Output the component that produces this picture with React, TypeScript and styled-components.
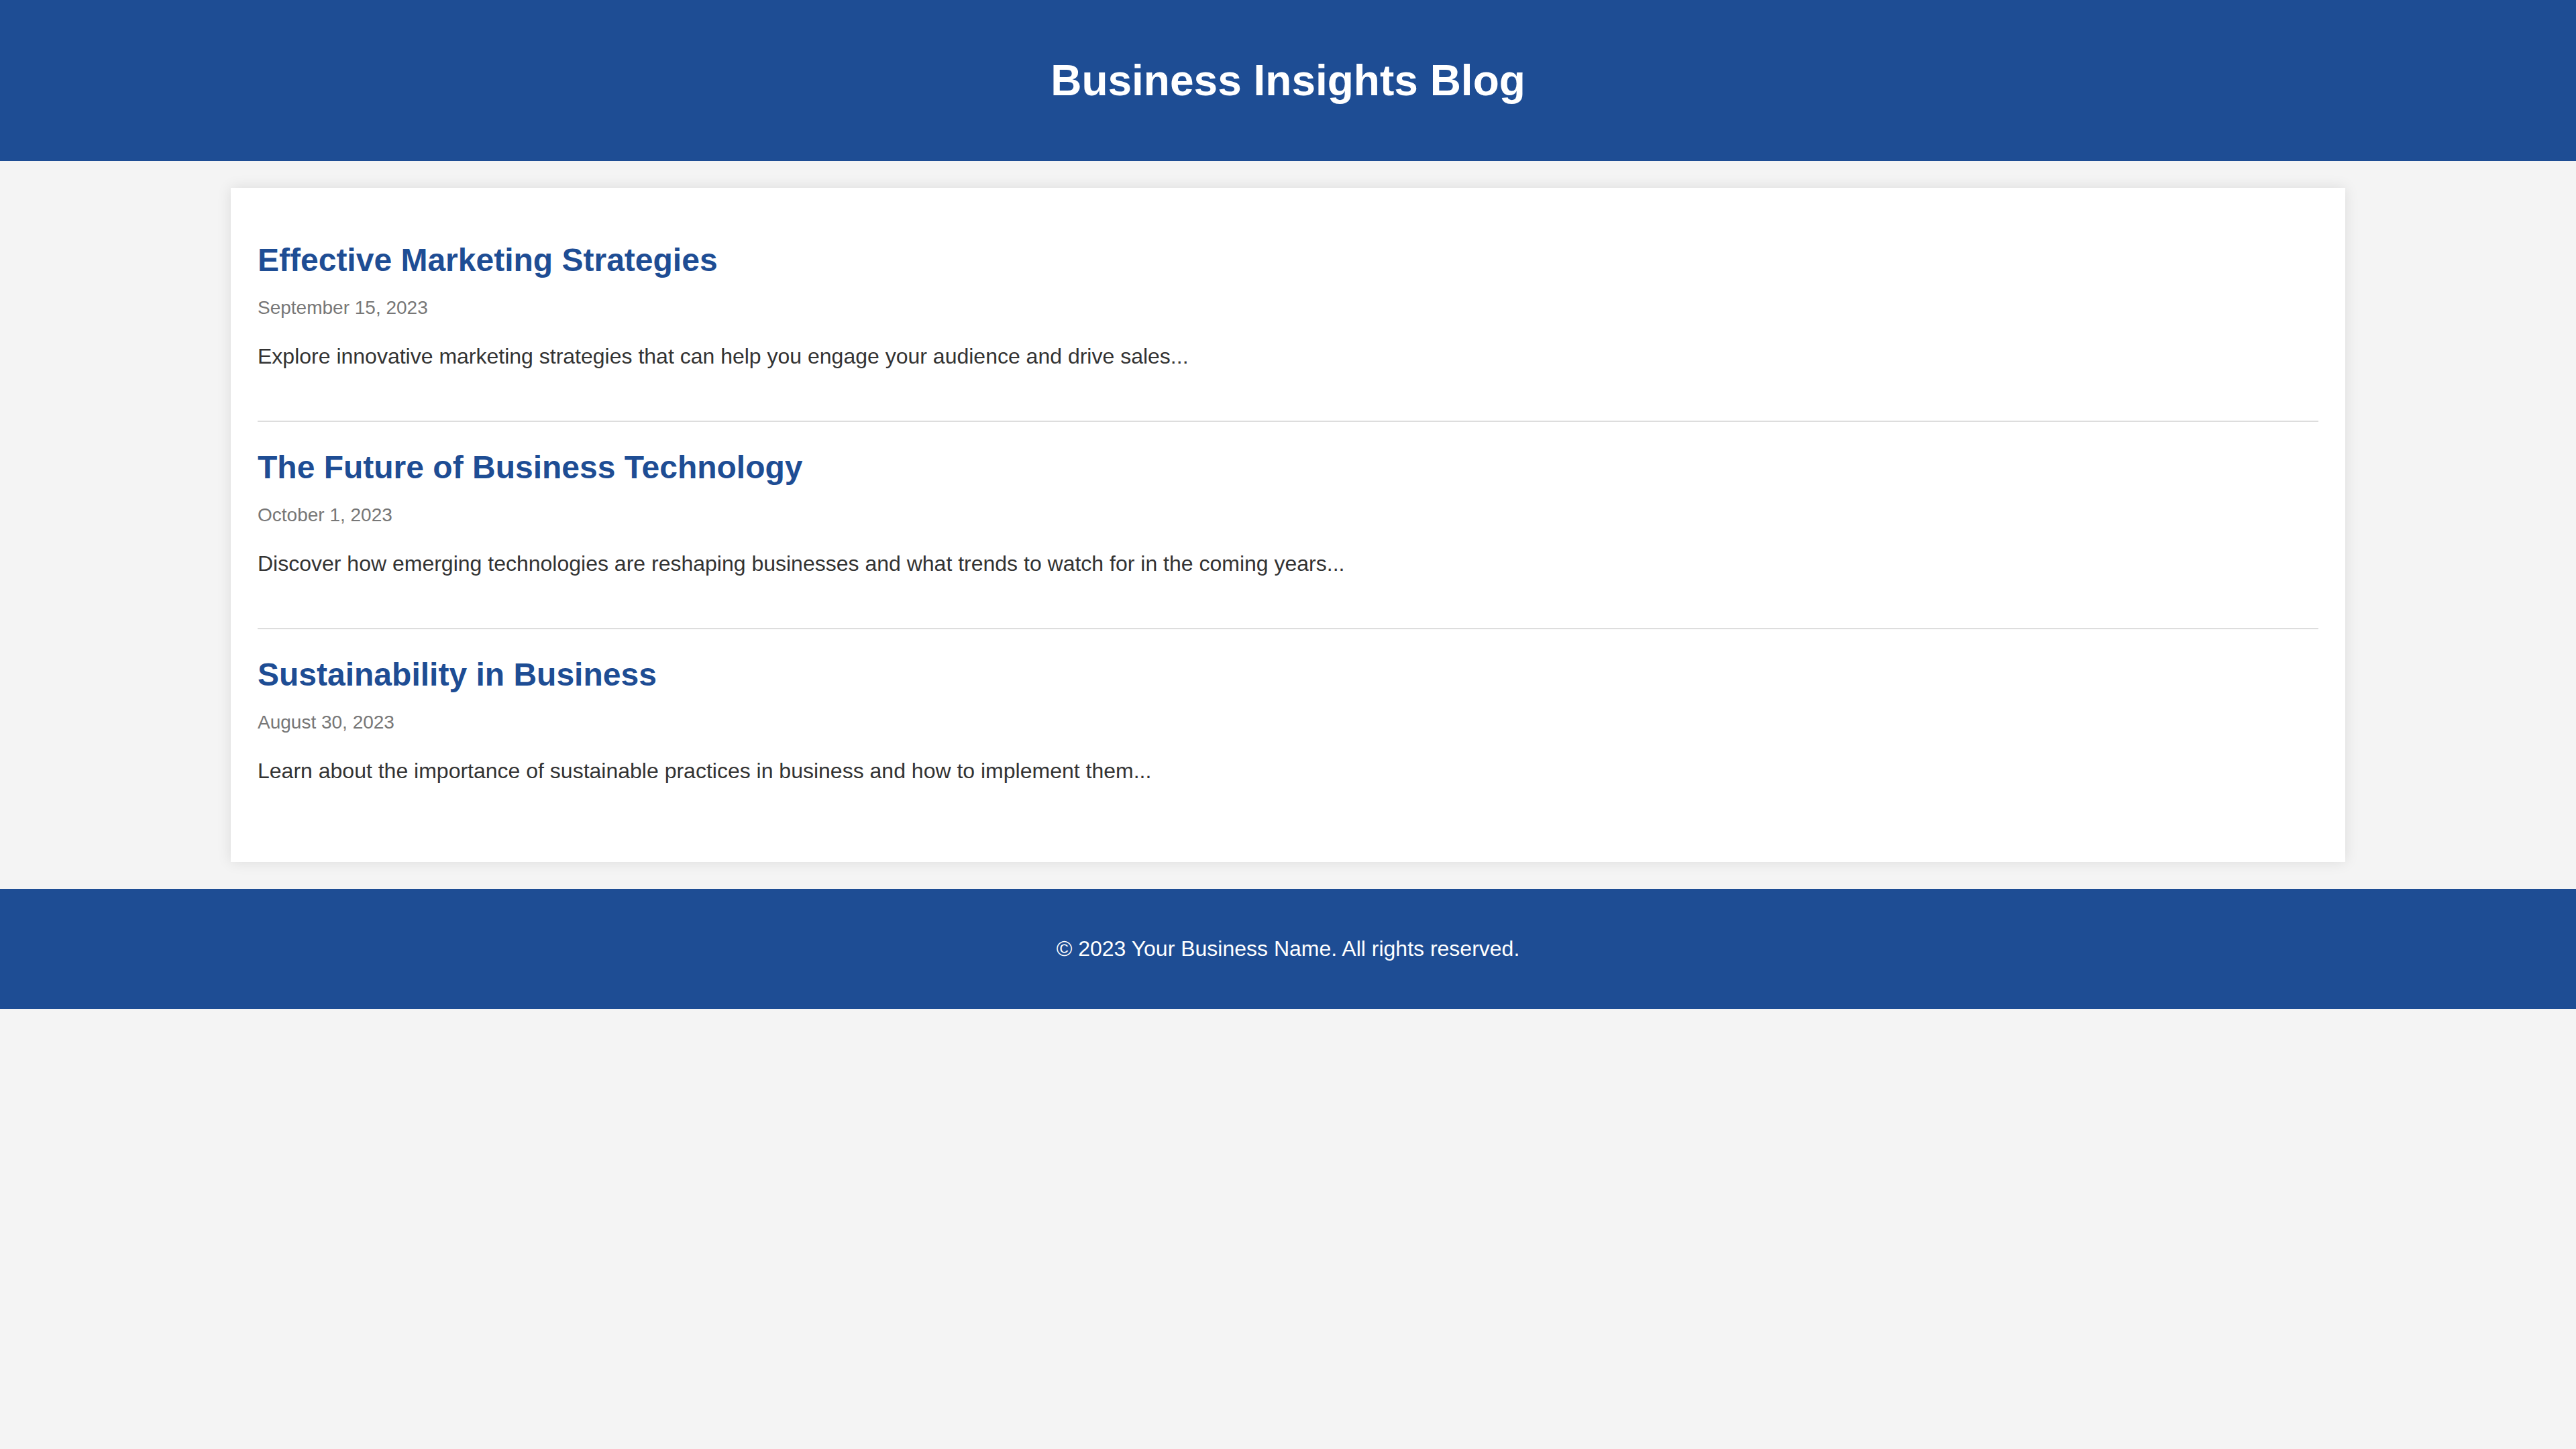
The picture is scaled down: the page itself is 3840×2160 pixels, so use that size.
import React from "react";
import styled, { createGlobalStyle } from "styled-components";

const Blue = "#1e4d94";

const GlobalStyle = createGlobalStyle`
  html, body {
    margin: 0;
    padding: 0;
    background: #f4f4f4;
    font-family: "Liberation Sans", Arial, sans-serif;
    color: #333;
  }
`;

const Styles = {
  Header: styled.header`
    background: ${Blue};
    color: #fff;
    padding: 40px;
    text-align: center;
  `,
  SiteTitle: styled.h1`
    margin: 0.67em 0;
    font-size: 64px;
    font-weight: bold;
  `,
  Container: styled.main`
    width: 80%;
    margin: 40px auto;
    padding: 40px;
    background: #fff;
    box-shadow: 0 0 20px rgba(0, 0, 0, 0.1);
  `,
  Post: styled.article`
    padding: 40px 0;
    border-bottom: 2px solid #ddd;

    &:last-child {
      border-bottom: none;
    }
  `,
  PostTitle: styled.h2`
    margin: 0 0 28px;
    font-size: 48px;
    font-weight: bold;
    color: ${Blue};
  `,
  PostDate: styled.p`
    margin: 0 0 38px;
    font-size: 28px;
    color: #777;
  `,
  Excerpt: styled.p`
    margin: 0 0 37px;
    font-size: 32px;
    color: #333;
  `,
  Footer: styled.footer`
    background: ${Blue};
    color: #fff;
    padding: 40px;
    text-align: center;
  `,
  FooterText: styled.p`
    margin: 31px 0;
    font-size: 32px;
  `,
};

const posts = [
  {
    title: "Effective Marketing Strategies",
    date: "September 15, 2023",
    excerpt:
      "Explore innovative marketing strategies that can help you engage your audience and drive sales...",
  },
  {
    title: "The Future of Business Technology",
    date: "October 1, 2023",
    excerpt:
      "Discover how emerging technologies are reshaping businesses and what trends to watch for in the coming years...",
  },
  {
    title: "Sustainability in Business",
    date: "August 30, 2023",
    excerpt:
      "Learn about the importance of sustainable practices in business and how to implement them...",
  },
];

const App = () => {
  return (
    <>
      <GlobalStyle />
      <Styles.Header>
        <Styles.SiteTitle>Business Insights Blog</Styles.SiteTitle>
      </Styles.Header>
      <Styles.Container>
        {posts.map((post, key) => (
          <Styles.Post key={key}>
            <Styles.PostTitle>{post.title}</Styles.PostTitle>
            <Styles.PostDate>{post.date}</Styles.PostDate>
            <Styles.Excerpt>{post.excerpt}</Styles.Excerpt>
          </Styles.Post>
        ))}
      </Styles.Container>
      <Styles.Footer>
        <Styles.FooterText>© 2023 Your Business Name. All rights reserved.</Styles.FooterText>
      </Styles.Footer>
    </>
  );
};

export default App;
